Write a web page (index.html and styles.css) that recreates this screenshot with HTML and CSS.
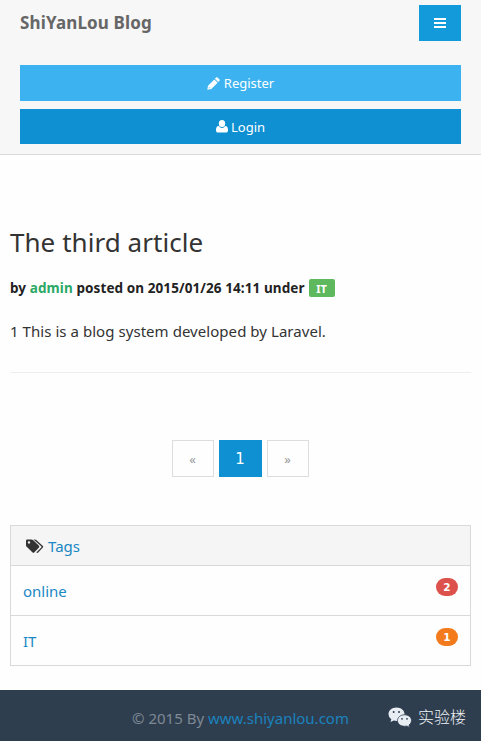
FILE: index.html
```html
<!DOCTYPE html>
<html lang="en">
<head>
<meta charset="utf-8">
<title>ShiYanLou Blog</title>
<link rel="stylesheet" href="styles.css">
</head>
<body>
<header class="topbar">
  <div class="topbar-row">
    <a class="brand">ShiYanLou Blog</a>
    <button class="menu" aria-label="Menu"><svg width="12" height="10" viewBox="0 0 12 10"><path fill="#fff" d="M0 0h12v2H0zM0 4h12v2H0zM0 8h12v2H0z"/></svg></button>
  </div>
  <a class="btn register"><svg width="13" height="13" viewBox="0 0 13 13"><path fill="currentColor" fill-rule="evenodd" d="M.3 12.700 1 8.700 7.300 2.400l3.300 3.300-6.300 6.300zM1.900 10l-.3 1.400 1.400-.3zM7.900 1.800 9.200.5q.7-.6 1.400 0l1.900 1.900q.6.7 0 1.400l-1.300 1.300z"/></svg><span>Register</span></a>
  <a class="btn login"><svg width="12" height="13" viewBox="0 0 12 13"><path fill="currentColor" d="M6 0a3.200 3.500 0 0 1 0 7A3.200 3.500 0 0 1 6 0zM2.800 6q1.200 2 3.200 2t3.200-2c2.200 0 2.800 2 2.800 4.200 0 1.500-.8 2.300-2 2.300H2c-1.200 0-2-.8-2-2.300C0 8 .6 6 2.800 6z"/></svg><span>Login</span></a>
</header>
<main>
  <article>
    <h1>The third article</h1>
    <p class="meta"><span>by <a>admin</a> posted on 2015/01/26 14:11 under</span><span class="label">IT</span></p>
    <p class="text">1 This is a blog system developed by Laravel.</p>
  </article>
  <nav class="pages"><a>«</a><a class="current">1</a><a>»</a></nav>
  <section class="panel">
    <div class="panel-head"><svg width="18" height="15" viewBox="0 0 18 15"><path fill="#333" fill-rule="evenodd" d="M0 1.800Q0 .5 1.300.5H5.500q.8 0 1.500.6l6 5.700q.8.8 0 1.600l-4.800 5q-.8.8-1.600 0L.7 7.800Q0 7.200 0 6.200zM3 2.200a1.200 1.200 0 1 0 0 2.400 1.200 1.200 0 0 0 0-2.400z"/><path fill="#333" d="M7.500.5h1.300q.8 0 1.500.6l6.600 5.900q.8.8 0 1.600l-4.700 5q-.9.8-1.900-.1l5-5.100q.5-.6-.1-1.200z"/></svg><a>Tags</a></div>
    <div class="item"><a>online</a><span class="badge red">2</span></div>
    <div class="item"><a>IT</a><span class="badge orange">1</span></div>
  </section>
</main>
<footer>
  <p>© 2015 By <a>www.shiyanlou.com</a></p>
  <div class="wechat"><svg width="24" height="21" viewBox="0 0 24 21"><path fill="#e8edf3" d="M8.500.5c4.500 0 8 2.800 8 6.700s-3.500 6.700-8 6.700q-1.400 0-2.700-.4L2.500 15l.8-2.800Q.5 10.200.5 7.200C.5 3.300 4 .5 8.500.5z"/><path fill="#e8edf3" stroke="#2f3e51" stroke-width=".8" d="M16.500 7.800c4 0 7 2.600 7 5.800q0 2.800-2.500 4.500l.6 2.300-2.800-1.400q-1.100.3-2.300.3c-4 0-7-2.500-7-5.700s3-5.800 7-5.800z"/><g fill="#2f3e51"><circle cx="5.700" cy="5" r="1"/><circle cx="11" cy="5" r="1"/><circle cx="14" cy="11.800" r=".9"/><circle cx="19" cy="11.800" r=".9"/></g></svg><span>实验楼</span></div>
</footer>
</body>
</html>
```
FILE: styles.css
```css
* { box-sizing: border-box; }
body { margin: 0; height: 741px; display: flex; flex-direction: column; background: #fefefe; color: #333; font: 15px/20px "Noto Sans", "Noto Sans CJK SC", sans-serif; }
h1, p { margin: 0; }
a { color: #1a88c4; }
svg { flex: none; display: block; }
.topbar { height: 155px; flex: none; padding: 5px 20px 0; background: #f7f7f7; border-bottom: 1px solid #dbd9db; }
.topbar-row { display: flex; justify-content: space-between; height: 60px; }
.brand { color: #666; font-size: 17px; letter-spacing: .15px; font-weight: 700; line-height: 36px; }
.menu { width: 42px; height: 36px; padding: 0; border: 0; background: #129adb; display: flex; align-items: center; justify-content: center; }
.btn { display: flex; align-items: center; justify-content: center; gap: 4px; color: #fff; font-size: 13px; }
.register { height: 36px; background: #3cb3f0; margin-bottom: 8px; }
.login { height: 35px; background: #0e90d2; gap: 3px; }
main { padding: 0 10px; height: 535px; }
article { height: 218px; padding-top: 69px; border-bottom: 1px solid #eee; }
h1 { font-size: 26px; letter-spacing: .05px; font-weight: 400; line-height: 36px; }
.meta { display: flex; align-items: center; gap: 4px; margin-top: 18px; height: 20px; color: #222; font-size: 13.500px; letter-spacing: .09px; font-weight: 700; }
.meta a { color: #2ba865; }
.label { width: 26px; height: 18px; border-radius: 2px; background: #5eb95e; color: #fff; font-size: 11px; line-height: 19px; text-align: center; }
.text { margin-top: 23px; letter-spacing: .05px; }
.pages { display: flex; justify-content: center; gap: 5px; margin: 67px 0 48px; padding-right: 1px; }
.pages a { width: 42px; height: 37px; border: 1px solid #ddd; color: #999; font-size: 13px; line-height: 37px; text-align: center; }
.pages .current { width: 43px; background: #0e90d2; border-color: #0e90d2; color: #fff; font-family: "DejaVu Sans", sans-serif; font-size: 15px; }
.panel { width: 461px; border: 1px solid #d9d9d9; }
.panel-head { display: flex; align-items: center; gap: 4px; height: 39px; padding: 1px 0 0 15px; background: #f5f5f5; }
.item { display: flex; justify-content: space-between; height: 50px; padding: 12px 12px 0; border-top: 1px solid #d9d9d9; line-height: 27px; }
.badge { width: 22px; height: 18px; border-radius: 9px; color: #fff; font-family: "DejaVu Sans", sans-serif; font-size: 10.500px; font-weight: 700; line-height: 19px; text-align: center; }
.red { background: #dd514c; }
.orange { background: #f37b1d; }
footer { position: relative; height: 51px; background: #2f3e4f; color: #7e8994; text-align: center; }
footer p { line-height: 57px; }
footer a { color: #1a82bd; }
.wechat { position: absolute; right: 15px; top: 16px; display: flex; align-items: center; gap: 6px; color: #eef1f5; font-family: "Noto Sans CJK SC", sans-serif; font-size: 16px; line-height: 20px; font-weight: 300; }
.wechat span { padding-bottom: 2px; }
```
